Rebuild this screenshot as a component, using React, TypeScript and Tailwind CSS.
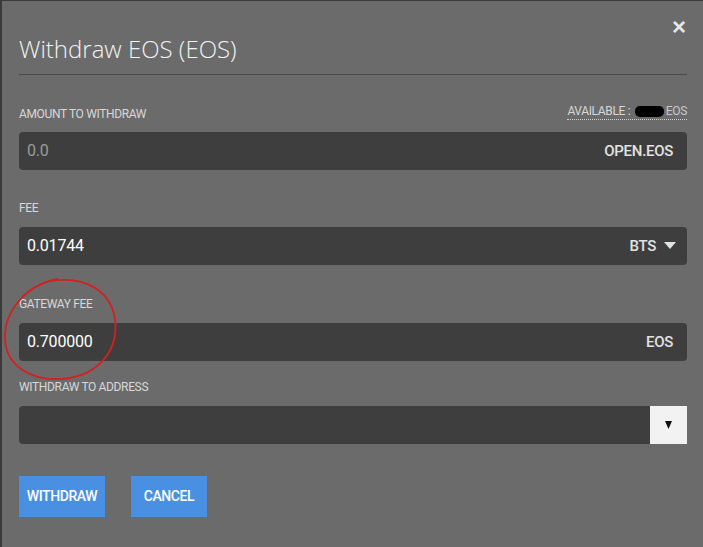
import React from 'react';

const cond = { fontFamily: '"Roboto", "Liberation Sans", sans-serif' };

const Label: React.FC<{ children: React.ReactNode }> = ({ children }) => (
  <div className="text-[12px] leading-none tracking-[-0.35px] text-[#d8d8d8] uppercase" style={cond}>
    {children}
  </div>
);

const Field: React.FC<{ value: string; placeholder?: boolean; unit: React.ReactNode; pr?: string }> = ({ value, placeholder, unit, pr = 'pr-[14px]' }) => (
  <div className={`h-[38px] rounded-[4px] bg-[#3e3e3e] flex items-center justify-between pl-2 ${pr}`}>
    <span className={`text-[16px] tracking-[-0.2px] ${placeholder ? 'text-[#9a9a9a]' : 'text-white'}`} style={cond}>
      {value}
    </span>
    <span className="text-[15px] font-medium tracking-[-0.3px] text-[#e2e2e2] flex items-center gap-2" style={cond}>
      {unit}
    </span>
  </div>
);

export default function App() {
  return (
    <div className="relative w-[703px] h-[547px] bg-[#6b6b6b] border-l-2 border-t border-[#3a3a3a] overflow-hidden">
      <div className="pl-[17px] pr-[16px]">
        {/* header */}
        <div className="pt-[36px] pb-[13px] border-b border-[#4a4a4a]">
          <h1 className="text-[24px] font-light text-[#f2f2f2] leading-none" style={{ fontFamily: '"Open Sans", "Noto Sans", sans-serif' }}>
            Withdraw EOS (EOS)
          </h1>
        </div>
        <button className="absolute top-[14px] right-[17px] text-[#e6e6e6] text-[24px] font-bold leading-none" style={{ fontFamily: '"Liberation Sans", sans-serif' }}>
          ×
        </button>

        {/* amount */}
        <div className="mt-[30px] flex items-end justify-between">
          <Label>Amount to withdraw</Label>
          <div className="text-[12px] leading-none tracking-[-0.35px] text-[#d8d8d8] border-b border-dotted border-[#cfcfcf] pb-[2px] flex items-center" style={cond}>
            <span>AVAILABLE :&nbsp;</span>
            <span className="inline-block w-[29px] h-[11px] rounded-[5px] bg-black mx-[2px]" />
            <span className="text-[#c8c8c8]">EOS</span>
          </div>
        </div>
        <div className="mt-[12px]">
          <Field value="0.0" placeholder unit="OPEN.EOS" />
        </div>

        {/* fee */}
        <div className="mt-[32px]">
          <Label>Fee</Label>
        </div>
        <div className="mt-[13px]">
          <Field
            value="0.01744"
            pr="pr-[11px]"
            unit={
              <>
                BTS
                <svg width="12" height="8" viewBox="0 0 12 8"><path d="M0 0h12L6 7z" fill="#e2e2e2" /></svg>
              </>
            }
          />
        </div>

        {/* gateway fee */}
        <div className="mt-[33px]">
          <Label>Gateway fee</Label>
        </div>
        <div className="mt-[13px]">
          <Field value="0.700000" unit="EOS" />
        </div>

        {/* address */}
        <div className="mt-[20px]">
          <Label>Withdraw to address</Label>
        </div>
        <div className="mt-[13px] flex h-[38px]">
          <div className="flex-1 bg-[#3e3e3e] rounded-l-[4px]" />
          <div className="w-[37px] bg-[#f2f2f2] flex items-center justify-center">
            <svg width="7" height="8" viewBox="0 0 7 8"><path d="M0 0h7L3.5 8z" fill="#111" /></svg>
          </div>
        </div>

        {/* buttons */}
        <div className="mt-[32px] flex gap-[26px]">
          <button className="h-[41px] w-[86px] bg-[#4a90e2] text-white text-[14px] font-medium tracking-[-0.4px] uppercase" style={cond}>
            Withdraw
          </button>
          <button className="h-[41px] w-[76px] bg-[#4a90e2] text-white text-[14px] font-medium tracking-[-0.4px] uppercase" style={cond}>
            Cancel
          </button>
        </div>
      </div>

      {/* hand-drawn annotation */}
      <svg className="absolute left-0 top-0 pointer-events-none" width="703" height="547">
        <path
          d="M56 278 C 22 284, 2 312, 3 338 C 4 364, 28 380, 60 378 C 96 375, 117 350, 113 318 C 109 292, 86 274, 48 280"
          fill="none"
          stroke="#d61f1f"
          strokeWidth="1.8"
        />
      </svg>
    </div>
  );
}
